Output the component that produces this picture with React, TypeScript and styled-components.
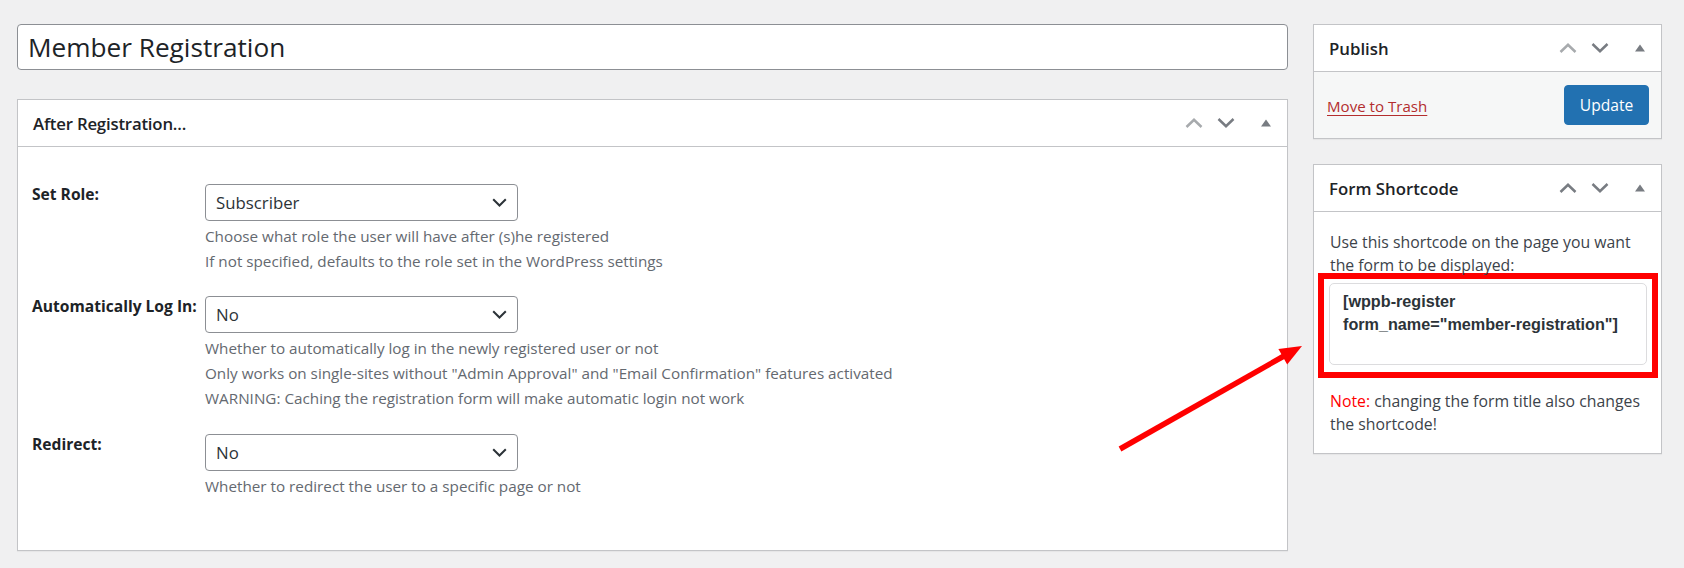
import React from "react";
import styled, { createGlobalStyle } from "styled-components";

const SANS = `"Segoe UI", "Open Sans", "Noto Sans", sans-serif`;

const GlobalStyle = createGlobalStyle`
  html, body { margin: 0; padding: 0; background: #f0f0f1; }
  body { font-family: ${SANS}; color: #3c434a; font-size: 15.6px; }
  #root { min-height: 568px; }
`;

const Page = styled.div`
  position: relative;
  display: grid;
  grid-template-columns: 1271px 349px;
  column-gap: 25px;
  align-items: start;
  padding: 24px 0 0 17px;
`;

const MainColumn = styled.div`
  display: flex;
  flex-direction: column;
  gap: 29px;
`;

const SideColumn = styled.div`
  display: flex;
  flex-direction: column;
  gap: 25px;
`;

const TitleField = styled.div`
  height: 46px;
  box-sizing: border-box;
  background: #fff;
  border: 1px solid #8c8f94;
  border-radius: 4px;
  display: flex;
  align-items: center;
  padding: 0 10px;
  font-size: 26.2px;
  color: #1d2327;
`;

const Postbox = styled.section`
  background: #fff;
  border: 1px solid #c3c4c7;
  box-shadow: 0 1px 1px rgba(0, 0, 0, 0.04);
`;

const PostboxHeader = styled.div`
  height: 47px;
  box-sizing: border-box;
  border-bottom: 1px solid #c3c4c7;
  display: flex;
  align-items: center;
  justify-content: space-between;
  padding: 0 1px 0 15px;
`;

const PostboxTitle = styled.h2<{ $tight?: boolean }>`
  margin: 0;
  font-size: 16.8px;
  font-weight: 600;
  color: #1d2327;
  letter-spacing: ${(p) => (p.$tight ? "-0.2px" : "0")};
`;

const HandleActions = styled.div`
  display: flex;
  align-items: center;
  height: 100%;
`;

const HandleButton = styled.span<{ $wide?: boolean }>`
  display: flex;
  align-items: center;
  justify-content: center;
  width: ${(p) => (p.$wide ? "40px" : "32px")};
  margin-left: ${(p) => (p.$wide ? "4px" : "0")};
  height: 100%;
`;

const Chevron = ({ dir, dim }: { dir: "up" | "down"; dim?: boolean }) => (
  <svg width="18" height="10" viewBox="0 0 18 10">
    <polyline
      points={dir === "up" ? "1.5,9 9,1.8 16.5,9" : "1.5,1 9,8.2 16.5,1"}
      fill="none"
      stroke={dim ? "#a7aaad" : "#787c82"}
      strokeWidth="2.5"
    />
  </svg>
);

const ToggleTriangle = () => (
  <svg width="10" height="8" viewBox="0 0 10 8">
    <polygon points="0,7.5 5,0.5 10,7.5" fill="#787c82" />
  </svg>
);

const Handles = ({ upDim }: { upDim?: boolean }) => (
  <HandleActions>
    <HandleButton>
      <Chevron dir="up" dim={upDim} />
    </HandleButton>
    <HandleButton>
      <Chevron dir="down" />
    </HandleButton>
    <HandleButton $wide>
      <ToggleTriangle />
    </HandleButton>
  </HandleActions>
);

/* ---------- main box ---------- */

const FormBody = styled.div`
  display: flex;
  flex-direction: column;
  gap: 23px;
  padding: 37px 15px 52px 14px;
`;

const FieldRow = styled.div`
  display: grid;
  grid-template-columns: 173px 1fr;
  align-items: start;
`;

const FieldLabel = styled.div`
  font-size: 15.6px;
  font-weight: 700;
  color: #1d2327;
  white-space: nowrap;
  padding-top: 0;
  line-height: 21px;
`;

const SelectBox = styled.div`
  width: 313px;
  height: 37px;
  box-sizing: border-box;
  border: 1px solid #8c8f94;
  border-radius: 4px;
  background: #fff;
  display: flex;
  align-items: center;
  justify-content: space-between;
  padding: 0 10px 0 10px;
  font-size: 16.8px;
  color: #2c3338;
`;

const SelectArrow = () => (
  <svg width="15" height="9" viewBox="0 0 15 9">
    <polyline points="1.2,1.2 7.5,7.5 13.8,1.2" fill="none" stroke="#2c3338" strokeWidth="2" />
  </svg>
);

const Description = styled.div`
  margin-top: 3px;
  font-size: 15.25px;
  line-height: 24.7px;
  color: #646970;
`;

const Field = ({ label, value, lines }: { label: string; value: string; lines: string[] }) => (
  <FieldRow>
    <FieldLabel>{label}</FieldLabel>
    <div>
      <SelectBox>
        <span>{value}</span>
        <SelectArrow />
      </SelectBox>
      <Description>
        {lines.map((l, i) => (
          <div key={i}>{l}</div>
        ))}
      </Description>
    </div>
  </FieldRow>
);

/* ---------- sidebar ---------- */

const PublishActions = styled.div`
  height: 66px;
  box-sizing: border-box;
  background: #f6f7f7;
  display: flex;
  align-items: center;
  justify-content: space-between;
  padding: 0 12px 0 13px;
`;

const TrashLink = styled.a`
  color: #b32d2e;
  font-size: 15.1px;
  text-decoration: underline;
  text-underline-offset: 3px;
  margin-top: 1px;
`;

const PrimaryButton = styled.button`
  width: 85px;
  height: 40px;
  border: 1px solid #2271b1;
  border-radius: 4px;
  background: #2271b1;
  color: #fff;
  font-family: ${SANS};
  font-size: 15.6px;
  padding: 0;
`;

const ShortcodeBody = styled.div`
  padding: 19px 15px 17px 16px;
  font-size: 15.8px;
  line-height: 23px;
  color: #3c434a;
`;

const Para = styled.p`
  margin: 0;
`;

const Highlight = styled.div`
  border: 6px solid #ff0000;
  padding: 4px 5px 7px;
  margin: -4px -12px 12px -12px;
`;

const ShortcodeField = styled.div`
  height: 82px;
  box-sizing: border-box;
  border: 1px solid #dcdcde;
  border-radius: 5px;
  background: #fff;
  padding: 6px 13px;
  font-family: "Liberation Sans", Arial, sans-serif;
  font-weight: 700;
  font-size: 16.2px;
  line-height: 23px;
  color: #2c3338;
`;

const NoteLabel = styled.span`
  color: #ff0000;
`;

const ArrowOverlay = styled.svg`
  position: absolute;
  left: 1100px;
  top: 330px;
  pointer-events: none;
`;

export default function App() {
  return (
    <>
      <GlobalStyle />
      <Page>
        <MainColumn>
          <TitleField>Member Registration</TitleField>
          <Postbox>
            <PostboxHeader>
              <PostboxTitle $tight>After Registration...</PostboxTitle>
              <Handles upDim />
            </PostboxHeader>
            <FormBody>
              <Field
                label="Set Role:"
                value="Subscriber"
                lines={[
                  "Choose what role the user will have after (s)he registered",
                  "If not specified, defaults to the role set in the WordPress settings",
                ]}
              />
              <Field
                label="Automatically Log In:"
                value="No"
                lines={[
                  "Whether to automatically log in the newly registered user or not",
                  'Only works on single-sites without "Admin Approval" and "Email Confirmation" features activated',
                  "WARNING: Caching the registration form will make automatic login not work",
                ]}
              />
              <Field
                label="Redirect:"
                value="No"
                lines={["Whether to redirect the user to a specific page or not"]}
              />
            </FormBody>
          </Postbox>
        </MainColumn>
        <SideColumn>
          <Postbox>
            <PostboxHeader>
              <PostboxTitle>Publish</PostboxTitle>
              <Handles upDim />
            </PostboxHeader>
            <PublishActions>
              <TrashLink>Move to Trash</TrashLink>
              <PrimaryButton>Update</PrimaryButton>
            </PublishActions>
          </Postbox>
          <Postbox>
            <PostboxHeader>
              <PostboxTitle>Form Shortcode</PostboxTitle>
              <Handles />
            </PostboxHeader>
            <ShortcodeBody>
              <Para>
                Use this shortcode on the page you want
                <br />
                the form to be displayed:
              </Para>
              <Highlight>
                <ShortcodeField>
                  [wppb-register
                  <br />
                  form_name="member-registration"]
                </ShortcodeField>
              </Highlight>
              <Para>
                <NoteLabel>Note:</NoteLabel> changing the form title also changes
                <br />
                the shortcode!
              </Para>
            </ShortcodeBody>
          </Postbox>
        </SideColumn>
        <ArrowOverlay width="220" height="135" viewBox="0 0 220 135">
          <line x1="20" y1="119" x2="184" y2="26" stroke="#ff0000" strokeWidth="5.5" />
          <polygon points="202,16 187.2,34.6 178.4,19" fill="#ff0000" />
        </ArrowOverlay>
      </Page>
    </>
  );
}
